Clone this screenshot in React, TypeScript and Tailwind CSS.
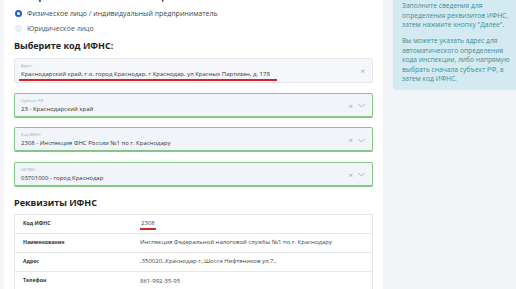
import React from "react";

function Field({ label, value, green, chevron }: { label: string; value: React.ReactNode; green?: boolean; chevron?: boolean }) {
  return (
    <div
      className={
        "relative h-[25px] rounded-[2px] px-[6px] pt-[4px] " +
        (green ? "border border-[#84c787] border-b-2 bg-[#f1f4f8]" : "border border-[#e4e7eb] bg-[#f4f6f9]")
      }
    >
      <div className="text-[4px] leading-[5px] text-[#a3a8ae]">{label}</div>
      <div className="mt-[1px] text-[6px] leading-[10px] text-[#333]">{value}</div>
      <div className="absolute right-[7px] top-[7px] flex items-center gap-[5px] text-[#a0a4a8]">
        <span className="text-[8px] leading-[10px]">×</span>
        {chevron && (
          <svg width="7" height="5" viewBox="0 0 7 5" fill="none" stroke="#a0a4a8" strokeWidth="0.8">
            <path d="M0.5 1 L3.5 4 L6.5 1" />
          </svg>
        )}
      </div>
    </div>
  );
}

function Row({ k, v, last }: { k: string; v: React.ReactNode; last?: boolean }) {
  return (
    <div className={"flex h-[19px] items-center " + (last ? "" : "border-b border-[#e6e6e6]")}>
      <div className="w-[125px] pl-[8px] text-[5.2px] font-bold text-[#333]">{k}</div>
      <div className="text-[6px] text-[#444]">{v}</div>
    </div>
  );
}

export default function App() {
  return (
    <div className="flex h-[289px] w-[516px] overflow-hidden bg-[#f3f4f8]" style={{ fontFamily: '"Open Sans", "Noto Sans", sans-serif' }}>
      <div className="ml-[4px] w-[379px] shrink-0 bg-white px-[10px]">
        <div className="-mt-[8px] text-[9px] font-bold leading-[10px] text-[#222]">Выберите тип налогоплательщика:</div>
        <div className="mt-[6.5px] flex h-[9px] items-center gap-[5px] pl-[1px]">
          <span className="h-[7px] w-[7px] rounded-full border-[2px] border-[#1d5fd6] bg-white"></span>
          <span className="text-[7px] leading-[9px] text-[#444]">Физическое лицо / индивидуальный предприниматель</span>
        </div>
        <div className="mt-[6px] flex h-[9px] items-center gap-[5px] pl-[1px]">
          <span className="h-[7px] w-[7px] rounded-full border border-[#dfe3e8] bg-[#eef1f5]"></span>
          <span className="text-[7px] leading-[9px] text-[#555]">Юридическое лицо</span>
        </div>
        <div className="mt-[7.5px] text-[9px] font-bold leading-[12px] text-[#222]">Выберите код ИФНС:</div>
        <div className="mt-[6px] flex flex-col gap-[9.5px]">
          <Field
            label="Адрес"
            value={
              <span className="-ml-[2px] border-b-2 border-[#d8232a] pb-[1px] pl-[2px] pr-[7px]">
                Краснодарский край, г.о. город Краснодар, г Краснодар, ул Красных Партизан, д. 178
              </span>
            }
          />
          <Field label="Субъект РФ" value="23 - Краснодарский край" green chevron />
          <Field label="Код ИФНС" value="2308 - Инспекция ФНС России №1 по г. Краснодару" green chevron />
          <Field label="ОКТМО" value="03701000 - город Краснодар" green chevron />
        </div>
        <div className="mt-[10px] text-[9px] font-bold leading-[12px] text-[#222]">Реквизиты ИФНС</div>
        <div className="mt-[5px] border border-[#e6e6e6]">
          <Row k="Код ИФНС" v={<span className="border-b-2 border-[#d8232a] px-[1px] pb-[1px]">2308</span>} />
          <Row k="Наименование" v="Инспекция Федеральной налоговой службы №1 по г. Краснодару" />
          <Row k="Адрес" v=",350020,,Краснодар г,,Шоссе Нефтяников ул,7,," />
          <Row k="Телефон" v="861-992-35-95" last />
        </div>
      </div>
      <div className="flex-1 pl-[10px] pr-[1px]">
        <div className="-mt-[4px] h-[94px] whitespace-nowrap rounded-[2px] bg-[#d3ebf0] px-[9px] pt-[5px] text-[6.7px] leading-[9.5px] text-[#3b8b9c]">
          <p>
            Заполните сведения для
            <br />
            определения реквизитов ИФНС,
            <br />
            затем нажмите кнопку "Далее".
          </p>
          <p className="mt-[6.5px]">
            Вы можете указать адрес для
            <br />
            автоматического определения
            <br />
            кода инспекции, либо напрямую
            <br />
            выбрать сначала субъект РФ, а
            <br />
            затем код ИФНС.
          </p>
        </div>
      </div>
    </div>
  );
}
